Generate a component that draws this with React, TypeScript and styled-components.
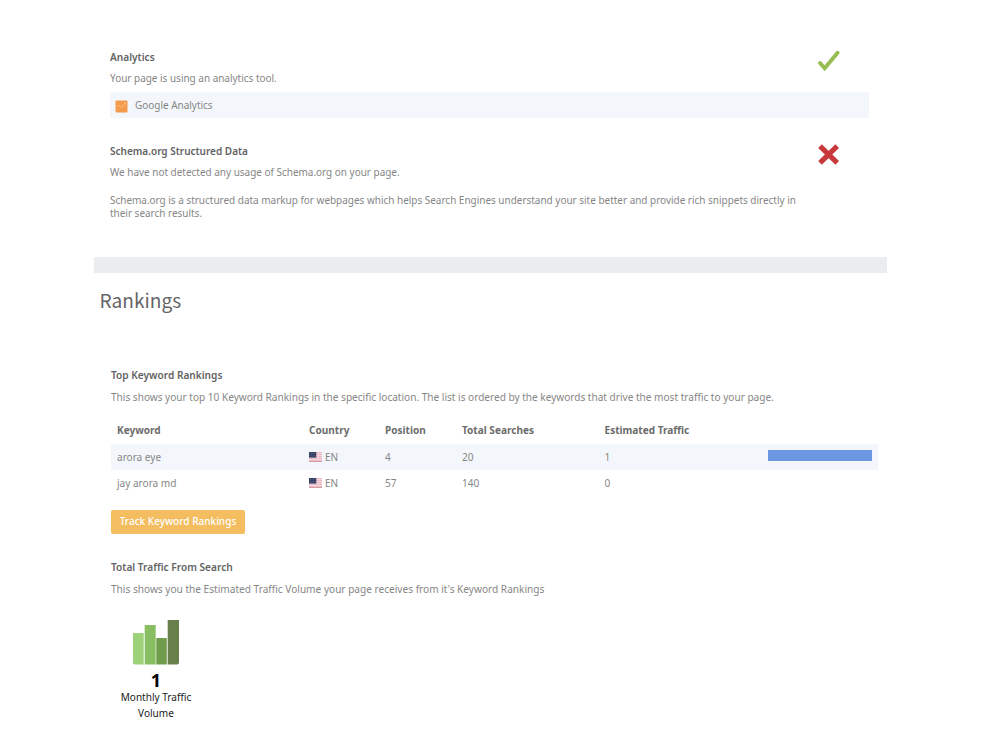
import React from "react";
import styled, { createGlobalStyle } from "styled-components";

const Global = createGlobalStyle`
  * { box-sizing: border-box; }
  body { margin: 0; background: #fff; font-family: "Noto Sans", "Open Sans", sans-serif; }
`;

const Page = styled.main`
  width: 1000px;
  height: 750px;
  overflow: hidden;
  padding-top: 47px;
  color: #868686;
  font-size: 10.05px;
`;

const Check = styled.section<{ $height: number }>`
  display: grid;
  grid-template-columns: 706px 1fr;
  width: 759px;
  height: ${(p) => p.$height}px;
  margin-left: 110px;
  align-content: start;
`;

const Title = styled.h3<{ $size?: number }>`
  margin: 0;
  height: 20px;
  line-height: 20px;
  font-size: ${(p) => p.$size ?? 10.15}px;
  font-weight: 600;
  color: #636363;
  white-space: nowrap;
`;

const Copy = styled.p<{ $size?: number; $gap?: number }>`
  margin: ${(p) => p.$gap ?? 0}px 0 0;
  line-height: 20px;
  font-size: ${(p) => p.$size ?? 9.96}px;
  white-space: nowrap;
`;

const Detail = styled(Copy)`
  line-height: 13.4px;
`;

const Status = styled.svg`
  display: block;
  width: 26px;
  height: 26px;
`;

const Tool = styled.div`
  grid-column: 1 / -1;
  display: flex;
  align-items: center;
  gap: 7px;
  height: 26px;
  margin-top: 4px;
  padding: 0 5px;
  background: #f3f7fb;
`;

const ToolIcon = styled.svg`
  width: 13px;
  height: 13px;
  margin-top: 2px;
`;

const Divider = styled.div`
  width: 793px;
  height: 16px;
  margin-left: 94px;
  background: #eaedf0;
`;

const SectionTitle = styled.h2`
  margin: 9px 0 0 99.5px;
  height: 36px;
  line-height: 36px;
  font-family: "Noto Sans CJK SC", "Noto Sans", sans-serif;
  font-size: 19.1px;
  font-weight: 400;
  color: #636567;
`;

const Report = styled.section`
  width: 767px;
  margin: 47px 0 0 111px;
`;

const Table = styled.div`
  margin-top: 10px;
`;

const Row = styled.div<{ $head?: boolean; $shaded?: boolean }>`
  display: grid;
  grid-template-columns: 192px 76px 77px 142.5px 163.5px 104px;
  align-items: center;
  height: 26.5px;
  padding-top: ${(p) => (p.$shaded ? 1 : 0)}px;
  padding-left: 6px;
  background: ${(p) => (p.$shaded ? "#f3f7fb" : "transparent")};
  font-weight: ${(p) => (p.$head ? 700 : 400)};
  color: ${(p) => (p.$head ? "#6c6c6c" : "#868686")};
`;

const Country = styled.span`
  display: flex;
  align-items: center;
  gap: 3px;
`;

const Flag = styled.svg`
  width: 13px;
  height: 10px;
`;

const Bar = styled.span`
  height: 11px;
  margin-top: -3px;
  background: #6c98e3;
`;

const Button = styled.button`
  display: block;
  width: 134px;
  height: 24px;
  margin: 13.5px 0 23px;
  padding: 0 0 2px;
  border: 0;
  border-radius: 2px;
  background: #f4bd60;
  color: #fff;
  font: 500 10.05px/22px "Noto Sans", sans-serif;
`;

const Metric = styled.div`
  display: flex;
  flex-direction: column;
  align-items: center;
  width: 90px;
  margin-top: 20px;
  color: #222;
  line-height: 16px;
  text-align: center;
`;

const Chart = styled.svg`
  width: 48px;
  height: 46px;
`;

const Value = styled.strong`
  height: 17px;
  margin: 7px 0 0;
  line-height: 17px;
  font-size: 18px;
  font-weight: 700;
  color: #000;
`;

const rows = [
  { keyword: "arora eye", position: 4, searches: 20, traffic: 1 },
  { keyword: "jay arora md", position: 57, searches: 140, traffic: 0 },
];

const UsFlag = () => (
  <Flag viewBox="0 0 13 10">
    <rect width="13" height="10" fill="#f3d9df" />
    {[0, 2, 4, 6, 8].map((y) => (
      <rect key={y} y={y} width="13" height="1" fill="#ebbcc5" />
    ))}
    <rect y="9" width="13" height="1" fill="#d79ba5" />
    <rect width="7.3" height="5.6" fill="#394267" />
    <path d="M1 1.5h5M1 3.5h5" stroke="#606a8c" strokeWidth=".6" strokeDasharray=".7 .8" />
  </Flag>
);

export default function App() {
  return (
    <>
      <Global />
      <Page>
        <Check $height={94}>
          <div>
            <Title>Analytics</Title>
            <Copy $gap={1}>Your page is using an analytics tool.</Copy>
          </div>
          <Status viewBox="0 0 26 26">
            <path d="M4 16 8.700 21.300 21.600 5.700" fill="none" stroke="#98bd52" strokeWidth="3.900" strokeLinejoin="miter" strokeLinecap="round" />
          </Status>
          <Tool>
            <ToolIcon viewBox="0 0 13 13">
              <rect x=".5" y=".5" width="12" height="12" rx="1" fill="#f39a4c" />
              <path d="M2 6.500 4.200 5l2.400 3 3-3.700" fill="none" stroke="#f9c48f" strokeWidth=".7" />
              <circle cx="10" cy="3.500" r=".9" fill="#f9c48f" />
            </ToolIcon>
            <Copy>Google Analytics</Copy>
          </Tool>
        </Check>
        <Check $height={116}>
          <div>
            <Title $size={10}>Schema.org Structured Data</Title>
            <Copy $gap={1}>We have not detected any usage of Schema.org on your page.</Copy>
            <Detail $gap={12}>
              Schema.org is a structured data markup for webpages which helps Search Engines understand your site better and provide rich snippets directly in
              <br />
              their search results.
            </Detail>
          </div>
          <Status viewBox="0 0 26 26">
            <path d="M4 5.200 21.200 21.900M21.200 5.200 4 21.900" stroke="#c8393b" strokeWidth="5.200" />
          </Status>
        </Check>
        <Divider />
        <SectionTitle>Rankings</SectionTitle>
        <Report>
          <Title>Top Keyword Rankings</Title>
          <Copy $gap={2} $size={10.07}>
            This shows your top 10 Keyword Rankings in the specific location. The list is ordered by the keywords that drive the most traffic to your page.
          </Copy>
          <Table>
            <Row $head>
              <span>Keyword</span>
              <span>Country</span>
              <span>Position</span>
              <span>Total Searches</span>
              <span>Estimated Traffic</span>
            </Row>
            {rows.map((r) => (
              <Row key={r.keyword} $shaded={r.traffic > 0}>
                <span>{r.keyword}</span>
                <Country>
                  <UsFlag />
                  EN
                </Country>
                <span>{r.position}</span>
                <span>{r.searches}</span>
                <span>{r.traffic}</span>
                {r.traffic > 0 && <Bar />}
              </Row>
            ))}
          </Table>
          <Button>Track Keyword Rankings</Button>
          <Title>Total Traffic From Search</Title>
          <Copy $gap={2} $size={10.1}>This shows you the Estimated Traffic Volume your page receives from it's Keyword Rankings</Copy>
          <Metric>
            <Chart viewBox="0 0 48 46">
              <path d="M1 14h10.700v31.500H3q-2 0-2-2z" fill="#9dd279" />
              <path d="M12.700 6h11v39.500h-11z" fill="#88bd62" />
              <path d="M24.300 19h10.500v26.500H24.300z" fill="#709d4c" />
              <path d="M35.700 1H47v42.500q0 2-2 2h-9.300z" fill="#687f4b" />
            </Chart>
            <Value>1</Value>
            <span>Monthly Traffic</span>
            <span>Volume</span>
          </Metric>
        </Report>
      </Page>
    </>
  );
}
